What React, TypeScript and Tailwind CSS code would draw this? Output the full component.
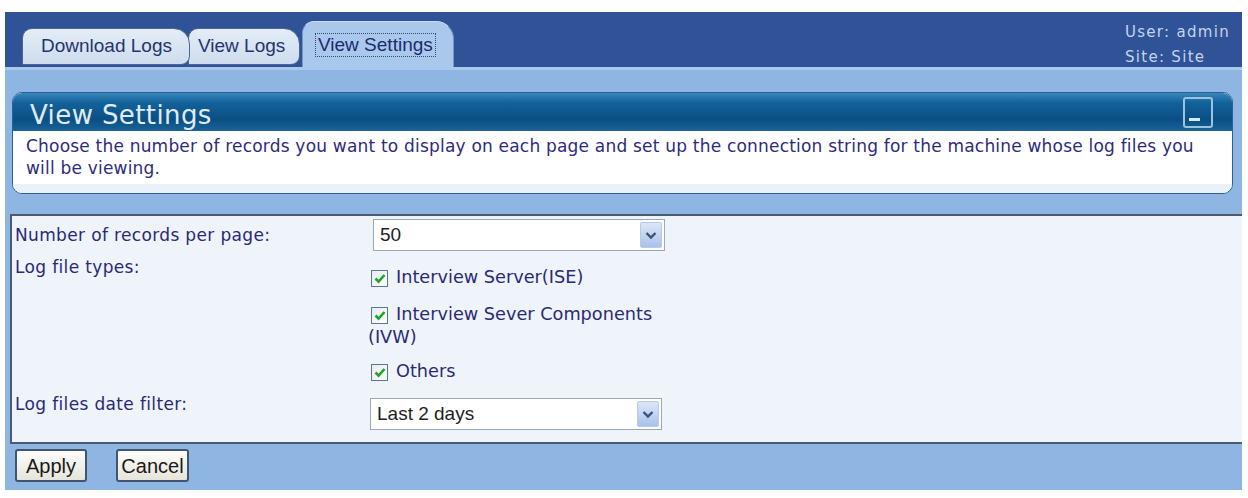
import React from "react";

const verdana = { fontFamily: '"DejaVu Sans", Verdana, sans-serif' };
const arial = { fontFamily: '"Liberation Sans", Arial, sans-serif' };

function Chevron() {
  return (
    <svg width="12" height="9" viewBox="0 0 12 9">
      <path d="M1.5 2 L6 6.5 L10.5 2" fill="none" stroke="#3e4f78" strokeWidth="2.4" />
    </svg>
  );
}

function Select({ value, className }: { value: string; className?: string }) {
  return (
    <div
      className={`flex h-[32px] w-[292px] items-stretch border border-[#9ba8b8] bg-white ${className ?? ""}`}
    >
      <div className="flex flex-1 items-center pl-[6px] text-[19px] text-[#1e1e1e]" style={arial}>
        {value}
      </div>
      <div className="m-[2px] flex w-[22px] items-center justify-center rounded-[2px] border border-[#b7cbe8] bg-gradient-to-b from-[#dbe7f8] to-[#a9c2ea]">
        <Chevron />
      </div>
    </div>
  );
}

function Check() {
  return (
    <span className="relative top-[1px] mr-[8px] ml-[3px] inline-flex h-[17px] w-[17px] items-center justify-center border border-[#5b7891] bg-gradient-to-br from-[#e6ecf1] to-[#ffffff] align-baseline">
      <svg width="12" height="11" viewBox="0 0 12 11">
        <path d="M1.5 5.5 L4.6 8.6 L10.5 2" fill="none" stroke="#22a428" strokeWidth="2.6" />
      </svg>
    </span>
  );
}

function Tab({ label, className }: { label: string; className: string }) {
  return (
    <div
      className={`flex h-[37px] items-center rounded-tl-[10px] rounded-tr-[16px] rounded-br-[9px] border border-[#4d6697] bg-gradient-to-b from-[#e3edf7] to-[#cddcee] text-[19px] text-[#27336f] ${className}`}
      style={arial}
    >
      {label}
    </div>
  );
}

export default function App() {
  return (
    <div className="h-[498px] w-[1248px] overflow-hidden bg-white pt-[12px]" style={verdana}>
      <div className="ml-[5px] w-[1237px]">
        {/* top bar with tabs and user info */}
        <div className="flex h-[55px] items-end justify-between bg-[#2f5396]">
          <div className="flex items-end pl-[17px]">
            <Tab label="Download Logs" className="relative z-10 mb-[2px] w-[168px] pl-[18px]" />
            <Tab label="View Logs" className="-ml-[2px] mb-[2px] w-[112px] pl-[9px]" />
            <div
              className="ml-[2px] flex h-[46px] w-[152px] items-center rounded-tl-[12px] rounded-tr-[18px] border-t border-r border-l border-t-[#c7dcf3] border-r-[#7598c8] border-l-[#7598c8] bg-[#a9c8ec] pl-[12px] text-[19px] text-[#1d2a6e]"
              style={arial}
            >
              <span className="border border-dotted border-[#3b4a6e] px-[2px] leading-[22px]">
                View Settings
              </span>
            </div>
          </div>
          <div className="self-start pt-[8px] pr-[12px] text-[15px] leading-[25px] tracking-[1.3px] text-[#c3d3ec]">
            <div>User: admin</div>
            <div>Site: Site</div>
          </div>
        </div>

        {/* content area */}
        <div className="h-[423px] border-t-[3px] border-t-[#a9c8ec] bg-[#8fb5e2]">
          {/* description panel */}
          <div className="mt-[22px] ml-[7px] w-[1221px] overflow-hidden rounded-[10px] border border-[#2d5f94] bg-white">
            <div className="flex h-[38px] items-start justify-between bg-[linear-gradient(to_bottom,#3a86bb_0%,#13629a_25%,#0a4f84_70%,#1a6497_100%)]">
              <div className="pt-[7px] pl-[17px] text-[26px] leading-[30px] tracking-[0.4px] text-[#e0ebf6]">
                View Settings
              </div>
              <div className="mt-[4px] mr-[19px] flex h-[31px] w-[30px] items-end rounded-[3px] border-2 border-[#9bc3df] pb-[5px] pl-[4px]">
                <div className="h-[3px] w-[11px] bg-[#d7e8f5]" />
              </div>
            </div>
            <div className="px-[13px] pt-[4px] pb-[5px] text-[17px] leading-[22px] tracking-[0.2px] text-[#2c2c7e]">
              Choose the number of records you want to display on each page and set up the
              connection string for the machine whose log files you will be viewing.
            </div>
            <div className="h-[9px] bg-[#eaf1f8]" />
          </div>

          {/* settings form */}
          <div className="mt-[20px] ml-[5px] h-[230px] border-y-2 border-l-2 border-[#4b5b6c] bg-[#eef4f9] pt-[3px] text-[17px] text-[#2a2a78]">
            <div className="flex h-[32px] items-center">
              <div className="w-[356px] pl-[3px] leading-[20px] tracking-[0.35px]">
                Number of records per page:
              </div>
              <Select value="50" className="ml-[5px]" />
            </div>
            <div className="mt-[6px] flex">
              <div className="w-[356px] pl-[3px] leading-[20px] tracking-[0.35px]">Log file types:</div>
              <div className="w-[302px] pt-[9px] text-[17.7px] leading-[23px]">
                <div className="mb-[14px]">
                  <Check />
                  Interview Server(ISE)
                </div>
                <div className="mb-[11px]">
                  <Check />
                  Interview Sever Components (IVW)
                </div>
                <div>
                  <Check />
                  Others
                </div>
              </div>
            </div>
            <div className="mt-[11px] flex">
              <div className="w-[356px] pl-[3px] leading-[20px] tracking-[0.35px]">
                Log files date filter:
              </div>
              <Select value="Last 2 days" className="mt-[4px] ml-[2px]" />
            </div>
          </div>

          {/* actions */}
          <div className="mt-[5px] flex gap-[29px] pl-[10px]">
            <button
              className="h-[33px] w-[72px] rounded-[3px] border-2 border-[#3e566f] bg-gradient-to-b from-[#fdfdfb] to-[#e6e4da] text-[20px] text-[#1a1a1a]"
              style={arial}
            >
              Apply
            </button>
            <button
              className="h-[33px] w-[73px] rounded-[3px] border-2 border-[#3e566f] bg-gradient-to-b from-[#fdfdfb] to-[#e6e4da] text-[20px] text-[#1a1a1a]"
              style={arial}
            >
              Cancel
            </button>
          </div>
        </div>
      </div>
    </div>
  );
}
